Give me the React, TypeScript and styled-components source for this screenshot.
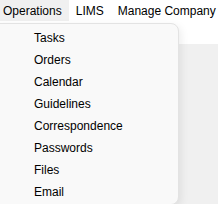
import React from 'react';
import styled, { createGlobalStyle } from 'styled-components';

const GlobalStyle = createGlobalStyle`
  html, body {
    margin: 0;
    padding: 0;
    background: #ffffff;
    font-family: "Liberation Sans", Arial, sans-serif;
    font-size: 12px;
    color: #000000;
    overflow: hidden;
  }
`;

const Page = styled.div`
  position: relative;
  display: flex;
  flex-direction: column;
  height: 100vh;
`;

const MenuBar = styled.div`
  display: flex;
  height: 22px;
  background: #ffffff;
`;

const MenuItem = styled.div<{ $active?: boolean; $first?: boolean }>`
  display: flex;
  align-items: center;
  padding: 0 7px 0 ${(p) => (p.$first ? '3px' : '7px')};
  height: 21px;
  white-space: nowrap;
  background: ${(p) => (p.$active ? '#f0f0f0' : 'transparent')};
`;

const ToolStrip = styled.div`
  height: 22px;
  background: #ffffff;
`;

const Workspace = styled.div`
  flex: 1;
  background: #f0f0f0;
`;

const Dropdown = styled.div`
  position: absolute;
  top: 23px;
  left: -10px;
  width: 189px;
  box-sizing: border-box;
  padding: 3px 0 1px;
  background: #f9f9f9;
  border: 1px solid #e3e3e3;
  border-radius: 8px;
  box-shadow: 2px 3px 8px rgba(0, 0, 0, 0.08);
`;

const DropdownItem = styled.div`
  display: flex;
  align-items: center;
  height: 22px;
  padding-left: 43px;
  white-space: nowrap;
`;

const menus = ['Operations', 'LIMS', 'Manage Company'];
const items = ['Tasks', 'Orders', 'Calendar', 'Guidelines', 'Correspondence', 'Passwords', 'Files', 'Email'];

const App = () => {
  return (
    <Page>
      <GlobalStyle />
      <MenuBar>
        {menus.map((m, i) => (
          <MenuItem key={m} $first={i === 0} $active={i === 0}>
            {m}
          </MenuItem>
        ))}
      </MenuBar>
      <ToolStrip />
      <Workspace />
      <Dropdown>
        {items.map((it) => (
          <DropdownItem key={it}>{it}</DropdownItem>
        ))}
      </Dropdown>
    </Page>
  );
};

export default App;
